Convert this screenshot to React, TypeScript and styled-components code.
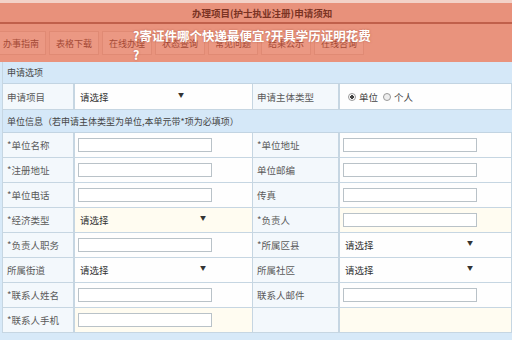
import React, { FC } from "react";
import styled, { createGlobalStyle } from "styled-components";

const Global = createGlobalStyle`
  html, body {
    margin: 0;
    padding: 0;
    background: #d7e9f8;
    font-family: "Noto Sans CJK SC", "Noto Sans", sans-serif;
  }
`;

const Page = styled.div`
  width: 512px;
  height: 340px;
  overflow: hidden;
  position: relative;
  background: #d7e9f8;
`;

const TopStrip = styled.div`
  height: 3px;
  background: #f3d2c8;
`;

const TitleBar = styled.div`
  height: 19px;
  background: #e8917b;
  display: flex;
  align-items: center;
  padding-left: 192px;
  font-size: 9.5px;
  font-weight: bold;
  color: #7a3323;
  border-bottom: 2px solid #c0604b;
`;

const TabBar = styled.div`
  height: 38px;
  background: #e9937d;
  display: flex;
  align-items: center;
  gap: 3px;
  margin-left: -4px;
`;

const Tab = styled.div`
  width: 50px;
  height: 24px;
  background: #eb9883;
  border: 1px solid #e08a74;
  box-sizing: border-box;
  display: flex;
  align-items: center;
  justify-content: center;
  font-size: 9px;
  color: #a54a36;
`;

const Overlay = styled.div`
  position: absolute;
  left: 133px;
  top: 26px;
  color: #fff;
  font-size: 12.5px;
  font-weight: bold;
  line-height: 19px;
  text-shadow: 0 0 2px rgba(150, 60, 40, 0.6);
`;

const Table = styled.div`
  margin: 0 0 0 2px;
  display: grid;
  grid-template-columns: 72px 178px 87px 1fr;
  border-left: 1px solid #c6d6e2;
`;

const Section = styled.div<{ h: number }>`
  grid-column: 1 / -1;
  height: ${(p) => p.h}px;
  display: flex;
  align-items: center;
  padding-left: 4px;
  font-size: 9px;
  color: #444;
  background: #d5e8f8;
  border-bottom: 1px solid #c2d4e2;
`;

const Label = styled.div<{ h?: number }>`
  height: ${(p) => p.h ?? 24}px;
  display: flex;
  align-items: center;
  padding-left: 4px;
  font-size: 9.5px;
  color: #5a5a5a;
  background: #f3f8fc;
  border-right: 2px solid #c6d6e2;
  border-bottom: 1px solid #c6d6e2;
`;

const Cell = styled.div<{ h?: number; cream?: boolean }>`
  height: ${(p) => p.h ?? 24}px;
  display: flex;
  align-items: center;
  padding-left: 3px;
  background: ${(p) => (p.cream ? "#fffcf1" : "#fefefe")};
  border-right: 1px solid #c6d6e2;
  border-bottom: 1px solid #c6d6e2;
  font-size: 9.5px;
  color: #444;
`;

const Input = styled.div`
  width: 134px;
  height: 14px;
  background: #fff;
  border: 1px solid #b9c2c8;
  box-sizing: border-box;
`;

const Select = styled.div<{ w: number }>`
  width: ${(p) => p.w}px;
  display: flex;
  justify-content: space-between;
  padding-left: 2px;
  box-sizing: border-box;
  font-size: 9.5px;
  color: #333;
  span:last-child {
    font-size: 6px;
  }
`;

const Radio = styled.span<{ on?: boolean }>`
  display: inline-block;
  width: 6px;
  height: 6px;
  border-radius: 50%;
  border: 1px solid #999;
  background: ${(p) => (p.on ? "radial-gradient(#444 40%, #fff 50%)" : "#eee")};
  margin: 0 3px 0 5px;
`;

const Sel: FC<{ w: number }> = ({ w }) => (
  <Select w={w}>
    <span>请选择</span>
    <span>▼</span>
  </Select>
);

type Kind = "input" | "select" | "none";
type Row = [string, Kind, string, Kind, boolean?];

const rows: Row[] = [
  ["*单位名称", "input", "*单位地址", "input"],
  ["*注册地址", "input", "单位邮编", "input"],
  ["*单位电话", "input", "传真", "input"],
  ["*经济类型", "select", "*负责人", "input", true],
  ["*负责人职务", "input", "*所属区县", "select"],
  ["所属街道", "select", "所属社区", "select"],
  ["*联系人姓名", "input", "联系人邮件", "input"],
  ["*联系人手机", "input", "", "none", true],
];

const tabs = ["办事指南", "表格下载", "在线办理", "状态查询", "常见问题", "结果公示", "在线咨询"];

const field = (k: Kind, right: boolean) =>
  k === "input" ? <Input /> : k === "select" ? <Sel w={right ? 130 : 128} /> : null;

const App: FC = () => (
  <Page>
    <Global />
    <TopStrip />
    <TitleBar>办理项目(护士执业注册)申请须知</TitleBar>
    <TabBar>
      {tabs.map((t) => (
        <Tab key={t}>{t}</Tab>
      ))}
    </TabBar>
    <Overlay>
      ?寄证件哪个快递最便宜?开具学历证明花费
      <br />?
    </Overlay>
    <Table>
      <Section h={21}>申请选项</Section>
      <Label h={25}>申请项目</Label>
      <Cell h={25}>
        <Sel w={106} />
      </Cell>
      <Label h={25}>申请主体类型</Label>
      <Cell h={25}>
        <Radio on />
        单位
        <Radio />
        个人
      </Cell>
      <Section h={22}>单位信息（若申请主体类型为单位,本单元带*项为必填项）</Section>
      {rows.map(([l1, f1, l2, f2, cream]) => (
        <React.Fragment key={l1}>
          <Label>{l1}</Label>
          <Cell cream={cream}>{field(f1, false)}</Cell>
          <Label>{l2}</Label>
          <Cell cream={cream}>{field(f2, true)}</Cell>
        </React.Fragment>
      ))}
    </Table>
  </Page>
);

export default App;
